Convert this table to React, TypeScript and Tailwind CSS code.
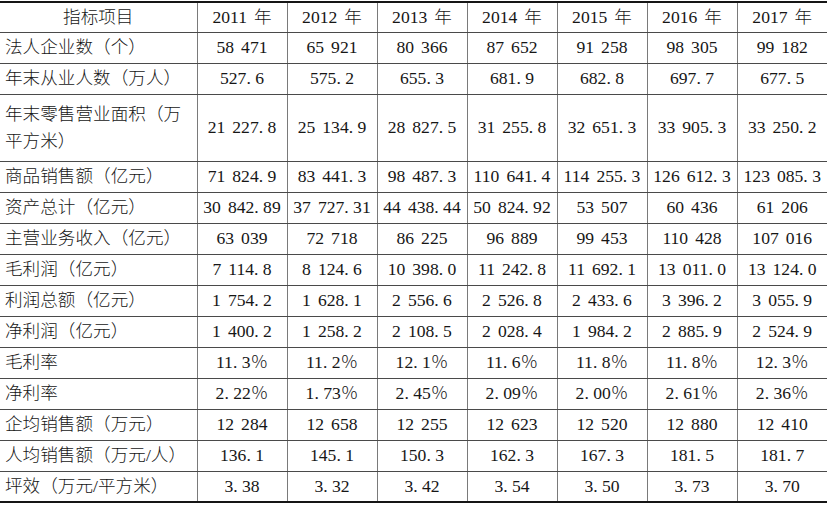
const years = ["2011", "2012", "2013", "2014", "2015", "2016", "2017"];

const rows: { label: string; values: string[]; tall?: boolean }[] = [
	{ label: "法人企业数（个）", values: ["58 471", "65 921", "80 366", "87 652", "91 258", "98 305", "99 182"] },
	{ label: "年末从业人数（万人）", values: ["527.6", "575.2", "655.3", "681.9", "682.8", "697.7", "677.5"] },
	{
		label: "年末零售营业面积（万平方米）",
		values: ["21 227.8", "25 134.9", "28 827.5", "31 255.8", "32 651.3", "33 905.3", "33 250.2"],
		tall: true,
	},
	{ label: "商品销售额（亿元）", values: ["71 824.9", "83 441.3", "98 487.3", "110 641.4", "114 255.3", "126 612.3", "123 085.3"] },
	{ label: "资产总计（亿元）", values: ["30 842.89", "37 727.31", "44 438.44", "50 824.92", "53 507", "60 436", "61 206"] },
	{ label: "主营业务收入（亿元）", values: ["63 039", "72 718", "86 225", "96 889", "99 453", "110 428", "107 016"] },
	{ label: "毛利润（亿元）", values: ["7 114.8", "8 124.6", "10 398.0", "11 242.8", "11 692.1", "13 011.0", "13 124.0"] },
	{ label: "利润总额（亿元）", values: ["1 754.2", "1 628.1", "2 556.6", "2 526.8", "2 433.6", "3 396.2", "3 055.9"] },
	{ label: "净利润（亿元）", values: ["1 400.2", "1 258.2", "2 108.5", "2 028.4", "1 984.2", "2 885.9", "2 524.9"] },
	{ label: "毛利率", values: ["11.3％", "11.2％", "12.1％", "11.6％", "11.8％", "11.8％", "12.3％"] },
	{ label: "净利率", values: ["2.22％", "1.73％", "2.45％", "2.09％", "2.00％", "2.61％", "2.36％"] },
	{ label: "企均销售额（万元）", values: ["12 284", "12 658", "12 255", "12 623", "12 520", "12 880", "12 410"] },
	{ label: "人均销售额（万元/人）", values: ["136.1", "145.1", "150.3", "162.3", "167.3", "181.5", "181.7"] },
	{ label: "坪效（万元/平方米）", values: ["3.38", "3.32", "3.42", "3.54", "3.50", "3.73", "3.70"] },
];

const Num = ({ v }: { v: string }) => (
	<>
		{v.split("").map((c, i) =>
			c === " " ? (
				<span key={i} className="inline-block w-[0.4em] whitespace-pre">
					{c}
				</span>
			) : c === "." ? (
				<span key={i} className="inline-block w-[0.5em] text-left">
					{c}
				</span>
			) : (
				<span key={i}>{c}</span>
			)
		)}
	</>
);

const cell = "border-l border-b border-l-[#7a7a7a] border-b-[#4a4a4a] text-center align-middle p-0";

export default function App() {
	return (
		<div className="w-[827px] h-[506px] bg-white pt-px overflow-hidden">
			<table className="w-[827px] table-fixed border-collapse text-[17.6px] font-light text-[#161616] font-['Liberation_Serif','Noto_Sans_CJK_SC',serif] border-t-2 border-t-[#151515] border-b-2 border-b-[#151515]">
				<colgroup>
					<col className="w-[197px]" />
					{years.map((y) => (
						<col key={y} className="w-[90px]" />
					))}
				</colgroup>
				<thead>
					<tr className="h-[30px]">
						<th className="border-b border-b-[#4a4a4a] font-light text-center p-0">指标项目</th>
						{years.map((y) => (
							<th key={y} className={`${cell} font-light`}>
								<Num v={`${y} 年`} />
							</th>
						))}
					</tr>
				</thead>
				<tbody>
					{rows.map((r) => (
						<tr key={r.label} className={r.tall ? "h-[67px]" : "h-[31px]"}>
							<td className="border-b border-b-[#4a4a4a] text-left align-middle pl-[5px] pr-[4px] py-0 leading-[27px] text-justify">
								<Num v={r.label} />
							</td>
							{r.values.map((v, i) => (
								<td key={i} className={`${cell} whitespace-nowrap`}>
									<Num v={v} />
								</td>
							))}
						</tr>
					))}
				</tbody>
			</table>
		</div>
	);
}
